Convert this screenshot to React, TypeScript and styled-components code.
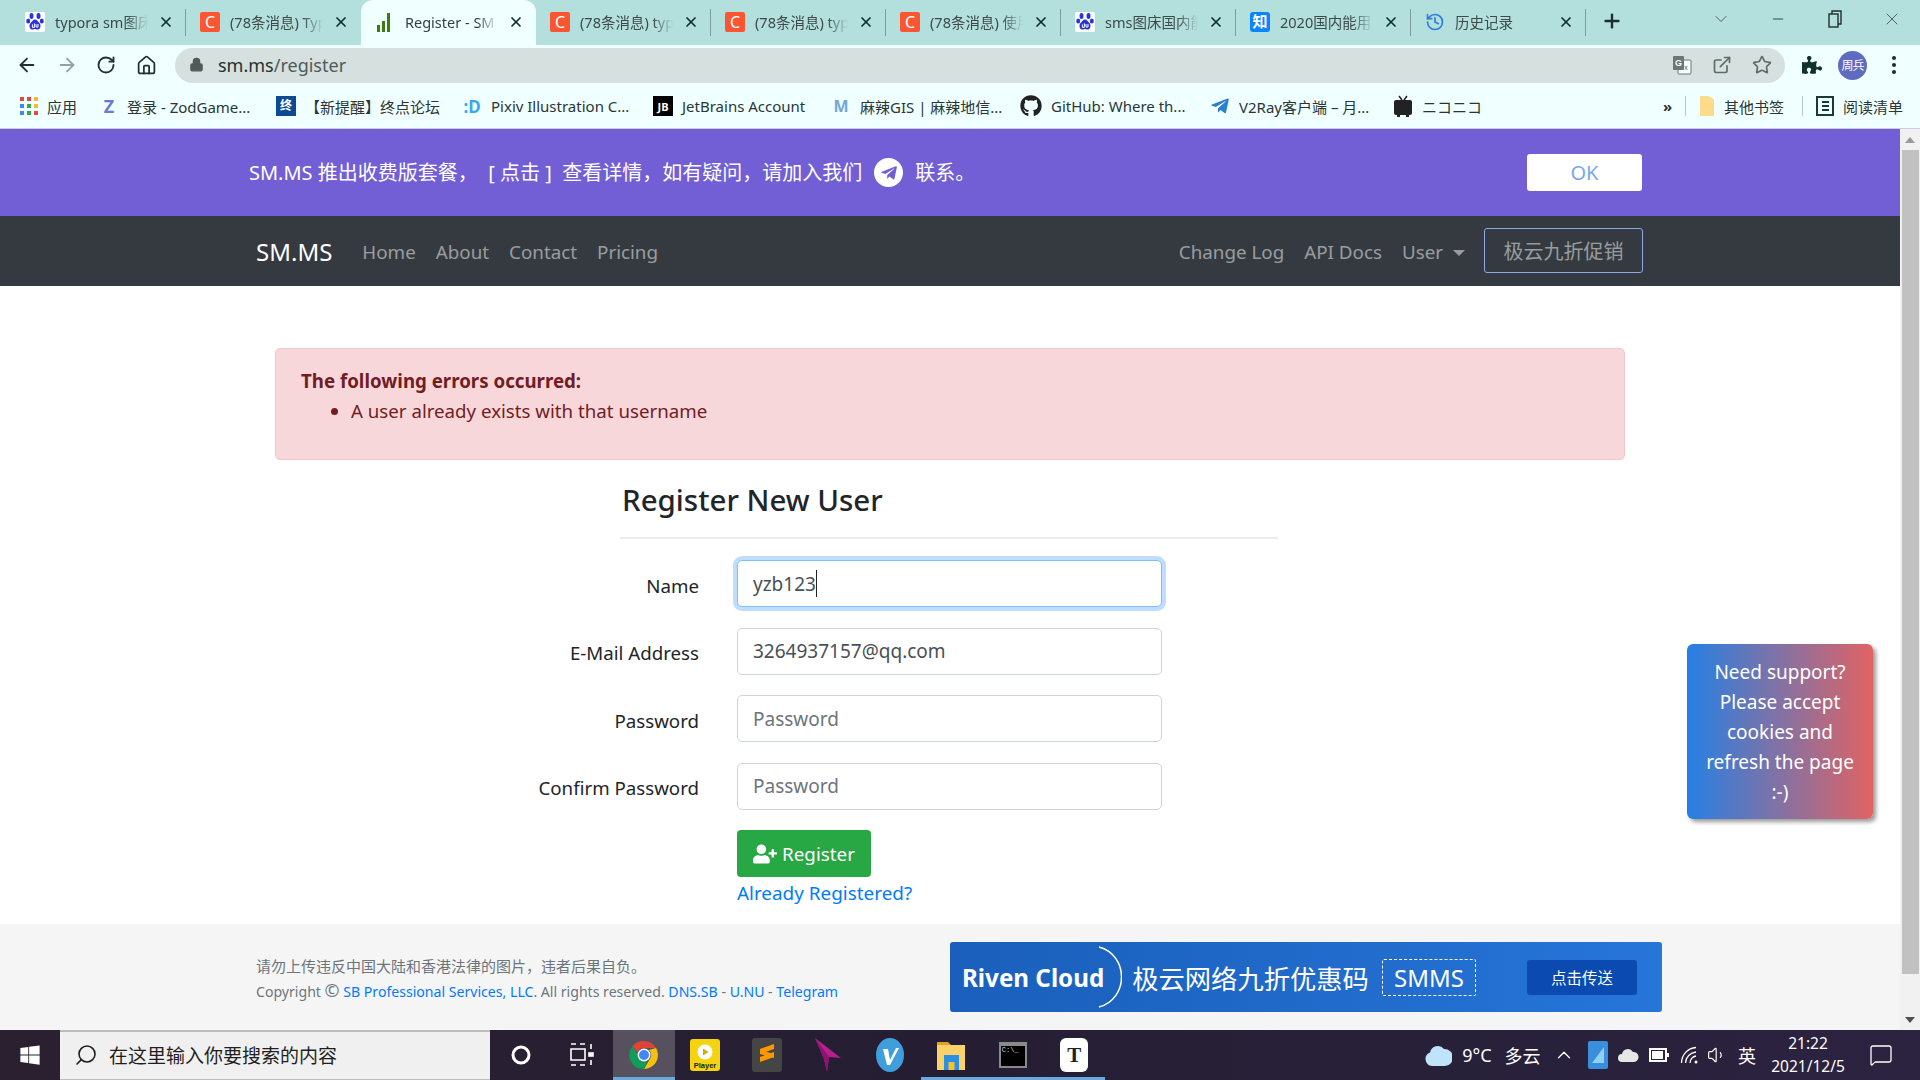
import React from "react";
import styled, { createGlobalStyle } from "styled-components";
import { ArrowLeft, ArrowRight, RotateCw, Home, X, Plus, ChevronDown, Minus, History, Star, ExternalLink, Lock, Search, ChevronUp, MessageSquare, Volume1 } from "lucide-react";
import { FaGithub, FaTelegramPlane, FaUserPlus, FaWindows, FaPuzzlePiece } from "react-icons/fa";

const SANS = `"Noto Sans", "Noto Sans CJK SC", sans-serif`;

const GlobalStyle = createGlobalStyle`
  html, body { margin: 0; padding: 0; height: 100%; overflow: hidden; }
  body { font-family: ${SANS}; color: #212529; background: #fff; }
  * { box-sizing: border-box; }
`;

const Screen = styled.div`
  width: 1920px;
  height: 1080px;
  display: flex;
  flex-direction: column;
`;

/* chrome tabs */
const TabStrip = styled.div`
  height: 45px;
  background: #b3dfdc;
  display: flex;
  align-items: stretch;
  padding-left: 11px;
`;

const Tab = styled.div<{ $active?: boolean; $sep?: boolean }>`
  width: 175px;
  display: flex;
  align-items: center;
  gap: 10px;
  padding: 0 12px 2px 14px;
  font-size: 14.5px;
  color: ${(p) => (p.$active ? "#34403f" : "#3d4a49")};
  background: ${(p) => (p.$active ? "#f0ffff" : "transparent")};
  border-radius: ${(p) => (p.$active ? "12px 12px 0 0" : "0")};
  position: relative;
  &::after {
    content: "";
    display: ${(p) => (p.$sep ? "block" : "none")};
    position: absolute;
    right: 0;
    top: 9px;
    bottom: 9px;
    width: 1px;
    background: #7d9c9a;
  }
`;

const TabTitle = styled.span`
  flex: 1;
  overflow: hidden;
  white-space: nowrap;
  -webkit-mask-image: linear-gradient(to right, #000 78%, transparent 100%);
  mask-image: linear-gradient(to right, #000 78%, transparent 100%);
`;

const TabClose = styled(X)`
  width: 16px;
  height: 16px;
  color: #10302e;
  flex: none;
`;

const NewTab = styled(Plus)`
  width: 22px;
  height: 22px;
  color: #1b2e2d;
  margin: 10px 0 0 15px;
`;

const WindowButtons = styled.div`
  margin-left: auto;
  display: flex;
  align-items: flex-start;
  gap: 37px;
  padding: 9px 18px 0 0;
  color: #3d4a49;
`;

const WinButton = styled.span`
  width: 20px;
  height: 20px;
  display: flex;
  align-items: center;
  justify-content: center;
`;

/* toolbar */
const Toolbar = styled.div`
  height: 43px;
  background: #f0ffff;
  display: flex;
  align-items: center;
  padding: 0 0 3px 16px;
`;

const NavIcon = styled.span<{ $muted?: boolean; $w?: number }>`
  width: ${(p) => p.$w || 40}px;
  height: 24px;
  display: flex;
  align-items: center;
  color: ${(p) => (p.$muted ? "#8fa3a2" : "#1f3130")};
`;

const AddressBar = styled.div`
  width: 1610px;
  height: 35px;
  border-radius: 18px;
  background: #d5e0df;
  display: flex;
  align-items: center;
  padding: 0 13px 1px 14px;
  font-size: 18px;
`;

const UrlHost = styled.span`
  margin-left: 14px;
  color: #25302f;
`;

const UrlPath = styled.span`
  color: #4e5b5a;
`;

const AddressActions = styled.div`
  margin-left: auto;
  display: flex;
  align-items: center;
  gap: 20px;
  color: #5f6b6a;
`;

const ToolbarEnd = styled.div`
  display: flex;
  align-items: center;
  padding-left: 17px;
  gap: 16px;
  color: #12302e;
`;

const Avatar = styled.span`
  width: 29px;
  height: 29px;
  border-radius: 50%;
  background: #5f6bc0;
  color: #fff;
  font-size: 12px;
  letter-spacing: -1px;
  display: flex;
  align-items: center;
  justify-content: center;
`;

const Dots = styled.span`
  width: 4px;
  margin-left: 9px;
  display: flex;
  flex-direction: column;
  gap: 3px;
  i {
    width: 4px;
    height: 4px;
    border-radius: 50%;
    background: #12302e;
  }
`;

/* bookmarks */
const BookmarkBar = styled.div`
  height: 41px;
  background: #f0ffff;
  border-bottom: 1px solid #c9cfe0;
  display: flex;
  align-items: center;
  padding: 0 0 4px 20px;
  font-size: 15px;
  color: #2a3635;
`;

const Bookmark = styled.div<{ $w: number; $pad?: number }>`
  width: ${(p) => p.$w}px;
  flex: none;
  display: flex;
  align-items: center;
  gap: 9px;
  padding-left: ${(p) => p.$pad || 0}px;
  white-space: nowrap;
  overflow: hidden;
`;

const BookmarkSep = styled.span`
  width: 1px;
  height: 20px;
  background: #b7c7c6;
  flex: none;
`;

const MoreMark = styled.span`
  width: 18px;
  flex: none;
  font-weight: 700;
  margin-left: -2px;
  margin-right: 4px;
`;

const MiniLogo = styled.span<{ $bg: string; $fg?: string; $size?: number; $round?: boolean; $w?: number }>`
  width: ${(p) => p.$w || 20}px;
  height: 20px;
  flex: none;
  background: ${(p) => p.$bg};
  color: ${(p) => p.$fg || "#fff"};
  font-size: ${(p) => p.$size || 13}px;
  font-weight: 700;
  line-height: 1;
  border-radius: ${(p) => (p.$round ? "3px" : "0")};
  display: flex;
  align-items: center;
  justify-content: center;
`;

const CsdnLogo = styled.span`
  width: 20px;
  height: 20px;
  flex: none;
  border-radius: 2px;
  background: #fc5531;
  color: #fff;
  font-size: 16px;
  display: flex;
  align-items: center;
  justify-content: center;
`;

/* page */
const Viewport = styled.div`
  flex: 1;
  display: flex;
  min-height: 0;
`;

const Page = styled.div`
  width: 1900px;
  display: flex;
  flex-direction: column;
  position: relative;
`;

const Notice = styled.div`
  height: 87px;
  background: #725fd6;
  display: flex;
  align-items: center;
  padding: 0 258px 0 249px;
  color: #fff;
  font-size: 20px;
  white-space: pre;
  line-height: 1;
`;

const NoticeBubble = styled.span`
  width: 29px;
  height: 29px;
  border-radius: 50%;
  background: #fff;
  color: #725fd6;
  margin: 0 12px;
  display: flex;
  align-items: center;
  justify-content: center;
`;

const OkButton = styled.button`
  margin-left: auto;
  width: 115px;
  height: 37px;
  border: 0;
  border-radius: 3px;
  background: #fff;
  color: #7aa7ec;
  font: 20px ${SANS};
`;

const NavBar = styled.nav`
  height: 70px;
  background: #343a40;
  display: flex;
  align-items: center;
  padding: 0 257px 0 256px;
`;

const Brand = styled.span`
  color: #fff;
  font-size: 24px;
  margin-right: 20px;
`;

const NavLink = styled.a`
  color: rgba(255, 255, 255, 0.5);
  font-size: 18.8px;
  padding: 1px 10px 0;
  white-space: nowrap;
`;

const Caret = styled.span`
  display: inline-block;
  margin-left: 10px;
  vertical-align: 3px;
  border-top: 6px solid rgba(255, 255, 255, 0.5);
  border-left: 6px solid transparent;
  border-right: 6px solid transparent;
`;

const NavRight = styled.div`
  margin-left: auto;
  display: flex;
  align-items: center;
`;

const PromoButton = styled.button`
  width: 159px;
  height: 45px;
  margin: -1px 0 0 9px;
  background: transparent;
  border: 1px solid #8fa8e8;
  border-radius: 3px;
  color: rgba(255, 255, 255, 0.5);
  font: 20px ${SANS};
`;

const Main = styled.main`
  flex: 1;
  padding-top: 62px;
`;

const Alert = styled.div`
  width: 1350px;
  height: 112px;
  margin-left: 275px;
  padding: 17px 25px;
  background: #f8d7da;
  border: 1px solid #f5c6cb;
  border-radius: 5px;
  color: #721c24;
  font-size: 18.7px;
  line-height: 30px;
  strong {
    font-weight: 700;
  }
  ul {
    margin: 0;
    padding-left: 50px;
  }
`;

const FormBox = styled.div`
  width: 778px;
  margin-left: 500px;
`;

const FormTitle = styled.h3`
  margin: 20px 0 0 122px;
  height: 57px;
  font-size: 29.5px;
  font-weight: 500;
  line-height: 40px;
  color: #212529;
`;

const FormRule = styled.hr`
  margin: 0 0 21px 120px;
  border: 0;
  border-top: 2px solid #ececec;
`;

const Row = styled.div`
  display: flex;
  align-items: center;
  height: 47px;
  margin-bottom: 20.5px;
`;

const FieldLabel = styled.label`
  width: 199px;
  margin-right: 38px;
  text-align: right;
  font-size: 18.7px;
  padding-top: 3px;
  white-space: nowrap;
`;

const FieldBox = styled.div<{ $focus?: boolean }>`
  width: 425px;
  height: 47px;
  padding: 0 15px;
  background: #fff;
  border: 1px solid ${(p) => (p.$focus ? "#80bdff" : "#ced4da")};
  border-radius: 5px;
  font-size: 19px;
  color: #495057;
  display: flex;
  align-items: center;
  box-shadow: ${(p) => (p.$focus ? "0 0 0 4px rgba(0, 123, 255, 0.25)" : "none")};
`;

const Placeholder = styled.span`
  color: #6c757d;
`;

const TextCursor = styled.span`
  display: inline-block;
  width: 1.5px;
  height: 27px;
  background: #222;
`;

const RegisterButton = styled.button`
  width: 134px;
  height: 47px;
  margin-left: 237px;
  display: flex;
  align-items: center;
  justify-content: center;
  gap: 5px;
  border: 0;
  border-radius: 4px;
  background: #28a745;
  color: #fff;
  font: 18.8px ${SANS};
`;

const LoginLink = styled.a`
  display: block;
  margin-left: 237px;
  font-size: 18.9px;
  line-height: 32px;
  color: #007bff;
`;

const Footer = styled.footer`
  height: 106px;
  background: #f5f5f5;
  display: flex;
  align-items: flex-start;
  padding: 18px 0 0 256px;
`;

const FooterText = styled.div`
  width: 694px;
  padding-top: 12px;
  font-size: 14.1px;
  line-height: 25px;
  color: #6c757d;
  a {
    color: #007bff;
  }
`;

const FooterNote = styled.div`
  font-size: 15px;
`;

const CopyMark = styled.span`
  font-size: 18px;
  line-height: 1;
`;

const RivenBanner = styled.div`
  width: 712px;
  height: 70px;
  background: linear-gradient(90deg, #1a5fbb, #2675d9);
  border-radius: 3px;
  display: flex;
  align-items: center;
  padding-left: 12px;
  color: #fff;
`;

const RivenName = styled.span`
  font-size: 24.2px;
  font-weight: 700;
  white-space: nowrap;
`;

const RivenArc = styled.svg`
  width: 24px;
  height: 62px;
  margin: 0 10px 0 -6px;
  flex: none;
`;

const RivenSlogan = styled.span`
  font-size: 26.3px;
  white-space: nowrap;
`;

const RivenCode = styled.span`
  width: 94px;
  height: 37px;
  margin-left: 13px;
  border: 1px dashed #fff;
  border-radius: 2px;
  font-size: 24px;
  display: flex;
  align-items: center;
  justify-content: center;
`;

const RivenButton = styled.span`
  width: 110px;
  height: 35px;
  margin-left: 51px;
  background: #0b4ab0;
  border-radius: 3px;
  font-size: 15.5px;
  display: flex;
  align-items: center;
  justify-content: center;
`;

const SupportBubble = styled.div`
  position: absolute;
  left: 1687px;
  bottom: 211px;
  width: 186px;
  height: 175px;
  padding: 13px 18px;
  background: linear-gradient(90deg, #2680e4, #e06363);
  border-radius: 6px;
  box-shadow: 3px 3px 4px rgba(0, 0, 0, 0.4);
  color: #fff;
  font-size: 19px;
  line-height: 30px;
  text-align: center;
`;

const ScrollTrack = styled.div`
  width: 20px;
  background: #f1f1f1;
  display: flex;
  flex-direction: column;
  align-items: center;
`;

const ScrollArrow = styled.span<{ $up?: boolean }>`
  height: 21px;
  display: flex;
  align-items: center;
  &::before {
    content: "";
    border-left: 5px solid transparent;
    border-right: 5px solid transparent;
    ${(p) => (p.$up ? "border-bottom: 6px solid #9a9a9a;" : "border-top: 6px solid #505050;")}
  }
`;

const ScrollThumb = styled.div`
  width: 17px;
  height: 824px;
  margin-bottom: auto;
  background: #c1c1c1;
`;

/* taskbar */
const Taskbar = styled.div`
  height: 50px;
  background: linear-gradient(90deg, #2b2030, #251e33 50%, #2b2340);
  display: flex;
  align-items: stretch;
  color: #fff;
`;

const StartButton = styled.span`
  width: 60px;
  display: flex;
  align-items: center;
  justify-content: center;
`;

const SearchBox = styled.div`
  width: 430px;
  background: #f0f0f0;
  border-top: 2px solid #bdbdbd;
  border-bottom: 1px solid #bdbdbd;
  display: flex;
  align-items: center;
  gap: 11px;
  padding: 0 0 2px 14px;
  color: #1f1f1f;
  font-size: 19px;
`;

const TaskSlot = styled.span<{ $active?: boolean; $open?: boolean }>`
  width: 61.5px;
  display: flex;
  align-items: center;
  justify-content: center;
  background: ${(p) => (p.$active ? "#56505f" : "transparent")};
  border-bottom: 3px solid ${(p) => (p.$active || p.$open ? "#6aa9dd" : "transparent")};
  padding-top: 3px;
`;

const TerminalIcon = styled.span`
  width: 28px;
  height: 26px;
  background: #000;
  border: 2px solid #8a8a8a;
  border-top-width: 4px;
  color: #ddd;
  font: 7px "Liberation Mono", monospace;
  padding-left: 1px;
  line-height: 8px;
`;

const TypeIcon = styled.span`
  width: 28px;
  height: 34px;
  background: #fff;
  border-radius: 6px;
  color: #222;
  font: 700 21px "Liberation Serif", serif;
  display: flex;
  align-items: center;
  justify-content: center;
`;

const Tray = styled.div`
  margin-left: auto;
  display: flex;
  align-items: center;
  font-size: 18px;
  padding-right: 27px;
`;

const TrayItem = styled.span<{ $w: number }>`
  width: ${(p) => p.$w}px;
  flex: none;
  display: flex;
  align-items: center;
  justify-content: center;
  white-space: nowrap;
`;

const Clock = styled.div`
  width: 110px;
  margin: 0 6px 0 -12px;
  text-align: center;
  font-size: 15.5px;
  line-height: 23px;
`;

const BaiduIcon = () => (
  <svg width="20" height="20" viewBox="0 0 20 20" style={{ flex: "none" }}>
    <rect width="20" height="20" rx="2" fill="#fff" />
    <g fill="#2932e1">
      <ellipse cx="6.5" cy="4" rx="2" ry="3" />
      <ellipse cx="13.5" cy="4" rx="2" ry="3" />
      <ellipse cx="3.2" cy="9" rx="2" ry="2.6" />
      <ellipse cx="16.8" cy="9" rx="2" ry="2.6" />
      <path d="M10 7.5c2.2 0 2.6 2 4.4 3.4 1.8 1.5 1.6 6.6-2 6.6-1.2 0-1.4-.5-2.4-.5s-1.4.5-2.4.5c-3.6 0-3.8-5.1-2-6.6C7.4 9.5 7.8 7.5 10 7.5z" />
    </g>
    <path d="M7.4 12.4v3h2v-4M11 12v3h2v-3" stroke="#fff" strokeWidth="1" fill="none" />
  </svg>
);

const SignalIcon = () => (
  <svg width="20" height="20" viewBox="0 0 20 20" style={{ flex: "none" }}>
    <path d="M2 13h3v7H2zM7 9h3v11H7zM12 1h3v19h-3z" fill="#3d7a12" />
  </svg>
);

const AppsIcon = () => {
  const colors = ["#e8453c", "#e8453c", "#f9bb2d", "#4285f4", "#34a853", "#f9bb2d", "#4285f4", "#34a853", "#e8453c"];
  return (
    <svg width="18" height="18" viewBox="0 0 18 18" style={{ flex: "none" }}>
      {colors.map((c, i) => (
        <rect key={i} x={(i % 3) * 7} y={Math.floor(i / 3) * 7} width="4" height="4" fill={c} />
      ))}
    </svg>
  );
};

const NicoIcon = () => (
  <svg width="20" height="22" viewBox="0 0 20 22" style={{ flex: "none" }}>
    <path d="M6 1l3 4M14 1l-3 4" stroke="#222" strokeWidth="1.5" />
    <rect x="1" y="5" width="18" height="15" rx="2" fill="#222" />
    <rect x="4" y="19" width="3" height="3" fill="#222" />
    <rect x="13" y="19" width="3" height="3" fill="#222" />
  </svg>
);

const ChromeIcon = () => (
  <svg width="30" height="30" viewBox="0 0 30 30">
    <path d="M15 1a14 14 0 0 1 12.1 7H15a7 7 0 0 0-6.6 4.7L3.6 6A14 14 0 0 1 15 1z" fill="#db4437" />
    <path d="M27.1 8A14 14 0 0 1 15 29l6.1-10.5A7 7 0 0 0 20 10z" fill="#f4c20d" />
    <path d="M15 29A14 14 0 0 1 3.6 6l6 10.5A7 7 0 0 0 18 21.5z" fill="#0f9d58" />
    <circle cx="15" cy="15" r="6.5" fill="#fff" />
    <circle cx="15" cy="15" r="5" fill="#4285f4" />
  </svg>
);

const PlayerIcon = () => (
  <svg width="30" height="32" viewBox="0 0 30 32">
    <rect width="30" height="32" rx="3" fill="#f5d40f" />
    <circle cx="15" cy="13" r="7.5" fill="#fff" />
    <path d="M13 9.5l5.5 3.5-5.5 3.5z" fill="#e0a400" />
    <text x="15" y="29" fontSize="7.5" fontWeight="700" textAnchor="middle" fill="#222" fontFamily="Liberation Sans">Player</text>
  </svg>
);

const SublimeIcon = () => (
  <svg width="30" height="34" viewBox="0 0 30 34">
    <rect width="30" height="34" rx="3" fill="#454545" />
    <path d="M22 6v5L8 16v-5zM22 14v5L8 24v-5zM8 12l14 4v4L8 16z" fill="#ff9800" />
  </svg>
);

const PaperPlaneIcon = () => (
  <svg width="30" height="36" viewBox="0 0 30 36">
    <path d="M2 1l26 20-12-1-2 15-3-13z" fill="#b51f8e" />
    <path d="M2 1l14 19-2 15-3-13z" fill="#8a1570" />
  </svg>
);

const VIcon = () => (
  <svg width="30" height="34" viewBox="0 0 30 34">
    <ellipse cx="15" cy="17" rx="14" ry="17" fill="#3f9fdc" />
    <path d="M8 11h5l2 11 6-12h3l-9 17h-3z" fill="#fff" />
  </svg>
);

const FolderIcon = () => (
  <svg width="30" height="32" viewBox="0 0 30 32">
    <path d="M1 3h11l3 3H1z" fill="#e0a020" />
    <rect x="1" y="6" width="28" height="25" fill="#fbd26a" />
    <rect x="8" y="16" width="15" height="15" fill="#2d8fe0" />
    <rect x="12.5" y="23" width="6" height="8" fill="#f4c430" />
  </svg>
);

const CloudTray = () => (
  <svg width="28" height="26" viewBox="0 0 28 26">
    <path d="M8 24a7 7 0 0 1-2-13.5A8 8 0 0 1 20 7a7.5 7.5 0 0 1 1 17z" fill="#bfe3fa" />
  </svg>
);

const TranslateIcon = () => (
  <svg width="20" height="20" viewBox="0 0 20 20" style={{ flex: "none" }}>
    <rect x="6" y="5" width="13" height="14" rx="1" fill="#f0ffff" stroke="#6b7675" />
    <rect x="1" y="1" width="11" height="14" rx="1" fill="#6b7675" />
    <text x="6.5" y="11" fontSize="9" fontWeight="700" textAnchor="middle" fill="#fff" fontFamily="Liberation Sans">G</text>
    <text x="14" y="15" fontSize="7" textAnchor="middle" fill="#4d5857" fontFamily="Liberation Sans">x</text>
  </svg>
);

const WifiTray = () => (
  <svg width="20" height="20" viewBox="0 0 20 20" fill="none" stroke="#fff" strokeWidth="1.3">
    <circle cx="16" cy="17" r="1.5" fill="#fff" stroke="none" />
    <path d="M10 18a7 7 0 0 1 6-7M5.5 18a11.5 11.5 0 0 1 10.5-11M1.5 18A15.5 15.5 0 0 1 16 2.5" />
  </svg>
);

const tabs = [
  { icon: <BaiduIcon />, title: "typora sm图床", sep: true },
  { icon: <CsdnLogo>C</CsdnLogo>, title: "(78条消息) Typ" },
  { icon: <SignalIcon />, title: "Register - SM", active: true },
  { icon: <CsdnLogo>C</CsdnLogo>, title: "(78条消息) typ", sep: true },
  { icon: <CsdnLogo>C</CsdnLogo>, title: "(78条消息) typ", sep: true },
  { icon: <CsdnLogo>C</CsdnLogo>, title: "(78条消息) 使用", sep: true },
  { icon: <BaiduIcon />, title: "sms图床国内能", sep: true },
  { icon: <MiniLogo $bg="#0a84ff" $size={15} $round>知</MiniLogo>, title: "2020国内能用", sep: true },
  { icon: <History size={20} color="#2b7fe0" style={{ flex: "none" }} />, title: "历史记录", sep: true },
];

const bookmarks = [
  { w: 80, icon: <AppsIcon />, label: "应用" },
  { w: 176, icon: <MiniLogo $bg="#f0ffff" $fg="#6a78d8" $size={18} $w={18}>Z</MiniLogo>, label: "登录 - ZodGame..." },
  { w: 186, icon: <MiniLogo $bg="#0c4a94" $size={12}>终</MiniLogo>, label: "【新提醒】终点论坛" },
  { w: 191, icon: <MiniLogo $bg="#f0ffff" $fg="#3ba8e8" $size={17}>:D</MiniLogo>, label: "Pixiv Illustration C..." },
  { w: 178, icon: <MiniLogo $bg="#000" $size={11}>JB</MiniLogo>, label: "JetBrains Account" },
  { w: 189, icon: <MiniLogo $bg="#f0ffff" $fg="#6fa8dc" $size={16}>M</MiniLogo>, label: "麻辣GIS | 麻辣地信..." },
  { w: 190, icon: <FaGithub size={22} color="#222" style={{ flex: "none" }} />, label: "GitHub: Where th..." },
  { w: 183, icon: <FaTelegramPlane size={20} color="#2a7fd0" style={{ flex: "none" }} />, label: "V2Ray客户端 – 月..." },
  { w: 272, icon: <NicoIcon />, label: "ニコニコ" },
];

const fields = [
  { label: "E-Mail Address", value: "3264937157@qq.com" },
  { label: "Password", placeholder: "Password" },
  { label: "Confirm Password", placeholder: "Password" },
];

const App = () => (
  <Screen>
    <GlobalStyle />
    <TabStrip>
      {tabs.map((t, i) => (
        <Tab key={i} $active={t.active} $sep={t.sep}>
          {t.icon}
          <TabTitle>{t.title}</TabTitle>
          <TabClose strokeWidth={2.6} />
        </Tab>
      ))}
      <NewTab strokeWidth={2.6} />
      <WindowButtons>
        <WinButton><ChevronDown size={20} strokeWidth={1} /></WinButton>
        <WinButton><Minus size={16} strokeWidth={1.6} /></WinButton>
        <WinButton>
          <svg width="14" height="18" viewBox="0 0 14 18" fill="none" stroke="#1f2e2d" strokeWidth="1.4">
            <rect x="1" y="4" width="9" height="13" />
            <path d="M4 4V1h9v13h-3" />
          </svg>
        </WinButton>
        <WinButton><X size={22} strokeWidth={1} /></WinButton>
      </WindowButtons>
    </TabStrip>

    <Toolbar>
      <NavIcon><ArrowLeft size={22} strokeWidth={2} /></NavIcon>
      <NavIcon $muted><ArrowRight size={22} strokeWidth={2} /></NavIcon>
      <NavIcon><RotateCw size={20} strokeWidth={2.2} /></NavIcon>
      <NavIcon $w={39}><Home size={21} strokeWidth={2} /></NavIcon>
      <AddressBar>
        <Lock size={15} fill="#4e5b5a" color="#4e5b5a" />
        <UrlHost>sm.ms</UrlHost>
        <UrlPath>/register</UrlPath>
        <AddressActions>
          <TranslateIcon />
          <ExternalLink size={20} />
          <Star size={20} strokeWidth={2} />
        </AddressActions>
      </AddressBar>
      <ToolbarEnd>
        <FaPuzzlePiece size={20} />
        <Avatar>周兵</Avatar>
        <Dots><i /><i /><i /></Dots>
      </ToolbarEnd>
    </Toolbar>

    <BookmarkBar>
      {bookmarks.map((b) => (
        <Bookmark key={b.label} $w={b.w}>
          {b.icon}
          <span>{b.label}</span>
        </Bookmark>
      ))}
      <MoreMark>»</MoreMark>
      <BookmarkSep />
      <Bookmark $w={116} $pad={13}>
        <svg width="16" height="22" viewBox="0 0 16 22"><path d="M1 1h8l6 3v17H1z" fill="#fcdc8a" /></svg>
        <span>其他书签</span>
      </Bookmark>
      <BookmarkSep />
      <Bookmark $w={118} $pad={13}>
        <svg width="18" height="20" viewBox="0 0 18 20" fill="none" stroke="#173a38" strokeWidth="2">
          <rect x="1" y="1" width="16" height="18" />
          <path d="M6 6h7M6 10h7M6 14h7" />
        </svg>
        <span>阅读清单</span>
      </Bookmark>
    </BookmarkBar>

    <Viewport>
      <Page>
        <Notice>
          {"SM.MS 推出收费版套餐，  [ 点击 ]  查看详情，如有疑问，请加入我们"}
          <NoticeBubble><FaTelegramPlane size={18} /></NoticeBubble>
          联系。
          <OkButton>OK</OkButton>
        </Notice>

        <NavBar>
          <Brand>SM.MS</Brand>
          <NavLink>Home</NavLink>
          <NavLink>About</NavLink>
          <NavLink>Contact</NavLink>
          <NavLink>Pricing</NavLink>
          <NavRight>
            <NavLink>Change Log</NavLink>
            <NavLink>API Docs</NavLink>
            <NavLink>User<Caret /></NavLink>
            <PromoButton>极云九折促销</PromoButton>
          </NavRight>
        </NavBar>

        <Main>
          <Alert>
            <strong>The following errors occurred:</strong>
            <ul>
              <li>A user already exists with that username</li>
            </ul>
          </Alert>
          <FormBox>
            <FormTitle>Register New User</FormTitle>
            <FormRule />
            <Row>
              <FieldLabel>Name</FieldLabel>
              <FieldBox $focus>yzb123<TextCursor /></FieldBox>
            </Row>
            {fields.map((f) => (
              <Row key={f.label}>
                <FieldLabel>{f.label}</FieldLabel>
                <FieldBox>{f.value || <Placeholder>{f.placeholder}</Placeholder>}</FieldBox>
              </Row>
            ))}
            <RegisterButton><FaUserPlus size={24} />Register</RegisterButton>
            <LoginLink>Already Registered?</LoginLink>
          </FormBox>
        </Main>

        <Footer>
          <FooterText>
            <FooterNote>请勿上传违反中国大陆和香港法律的图片，违者后果自负。</FooterNote>
            Copyright <CopyMark>©</CopyMark> <a>SB Professional Services, LLC</a>. All rights reserved. <a>DNS.SB</a> - <a>U.NU</a> - <a>Telegram</a>
          </FooterText>
          <RivenBanner>
            <RivenName>Riven Cloud</RivenName>
            <RivenArc viewBox="0 0 24 62">
              <path d="M1 1c30 8 30 52 0 60" fill="none" stroke="#fff" strokeWidth="1.5" />
            </RivenArc>
            <RivenSlogan>极云网络九折优惠码</RivenSlogan>
            <RivenCode>SMMS</RivenCode>
            <RivenButton>点击传送</RivenButton>
          </RivenBanner>
        </Footer>

        <SupportBubble>Need support? Please accept cookies and refresh the page :-)</SupportBubble>
      </Page>
      <ScrollTrack>
        <ScrollArrow $up />
        <ScrollThumb />
        <ScrollArrow />
      </ScrollTrack>
    </Viewport>

    <Taskbar>
      <StartButton><FaWindows size={22} /></StartButton>
      <SearchBox><Search size={24} strokeWidth={1.6} style={{ transform: "scaleX(-1)" }} />在这里输入你要搜索的内容</SearchBox>
      <TaskSlot>
        <svg width="22" height="22" viewBox="0 0 22 22"><circle cx="11" cy="11" r="8" fill="none" stroke="#fff" strokeWidth="3" /></svg>
      </TaskSlot>
      <TaskSlot>
        <svg width="24" height="26" viewBox="0 0 24 26" fill="none" stroke="#fff" strokeWidth="1.6">
          <path d="M1 2h5M10 2h5M1 7h14v11H1zM1 23h5M10 23h5" />
          <path d="M21 2v5M21 18v5" />
          <rect x="19" y="11" width="4" height="3" fill="#fff" />
        </svg>
      </TaskSlot>
      <TaskSlot $active><ChromeIcon /></TaskSlot>
      <TaskSlot><PlayerIcon /></TaskSlot>
      <TaskSlot><SublimeIcon /></TaskSlot>
      <TaskSlot><PaperPlaneIcon /></TaskSlot>
      <TaskSlot><VIcon /></TaskSlot>
      <TaskSlot $open><FolderIcon /></TaskSlot>
      <TaskSlot $open><TerminalIcon>C:\_</TerminalIcon></TaskSlot>
      <TaskSlot $open><TypeIcon>T</TypeIcon></TaskSlot>
      <Tray>
        <TrayItem $w={32}><CloudTray /></TrayItem>
        <TrayItem $w={46}>9°C</TrayItem>
        <TrayItem $w={45}>多云</TrayItem>
        <TrayItem $w={38}><ChevronUp size={22} strokeWidth={1.4} /></TrayItem>
        <TrayItem $w={30}>
          <svg width="20" height="28" viewBox="0 0 20 28"><rect width="20" height="28" rx="2" fill="#3a8fdc" /><path d="M4 22L16 6v16z" fill="#8fd0f5" /></svg>
        </TrayItem>
        <TrayItem $w={30}>
          <svg width="22" height="16" viewBox="0 0 22 16"><path d="M5 15a4 4 0 0 1 0-8 6 6 0 0 1 11-2 5 5 0 0 1 1 10z" fill="#e6e6e6" /></svg>
        </TrayItem>
        <TrayItem $w={31}>
          <svg width="20" height="14" viewBox="0 0 20 14"><rect x="1" y="1" width="16" height="12" fill="#2b2340" stroke="#fff" strokeWidth="2" /><rect x="3" y="3" width="11" height="8" fill="#fff" /><rect x="18" y="5" width="2" height="4" fill="#fff" /></svg>
        </TrayItem>
        <TrayItem $w={31}><WifiTray /></TrayItem>
        <TrayItem $w={24}><Volume1 size={20} strokeWidth={1.4} /></TrayItem>
        <TrayItem $w={36}>英</TrayItem>
        <Clock>21:22<br />2021/12/5</Clock>
        <MessageSquare size={24} strokeWidth={1.3} />
      </Tray>
    </Taskbar>
  </Screen>
);

export default App;
